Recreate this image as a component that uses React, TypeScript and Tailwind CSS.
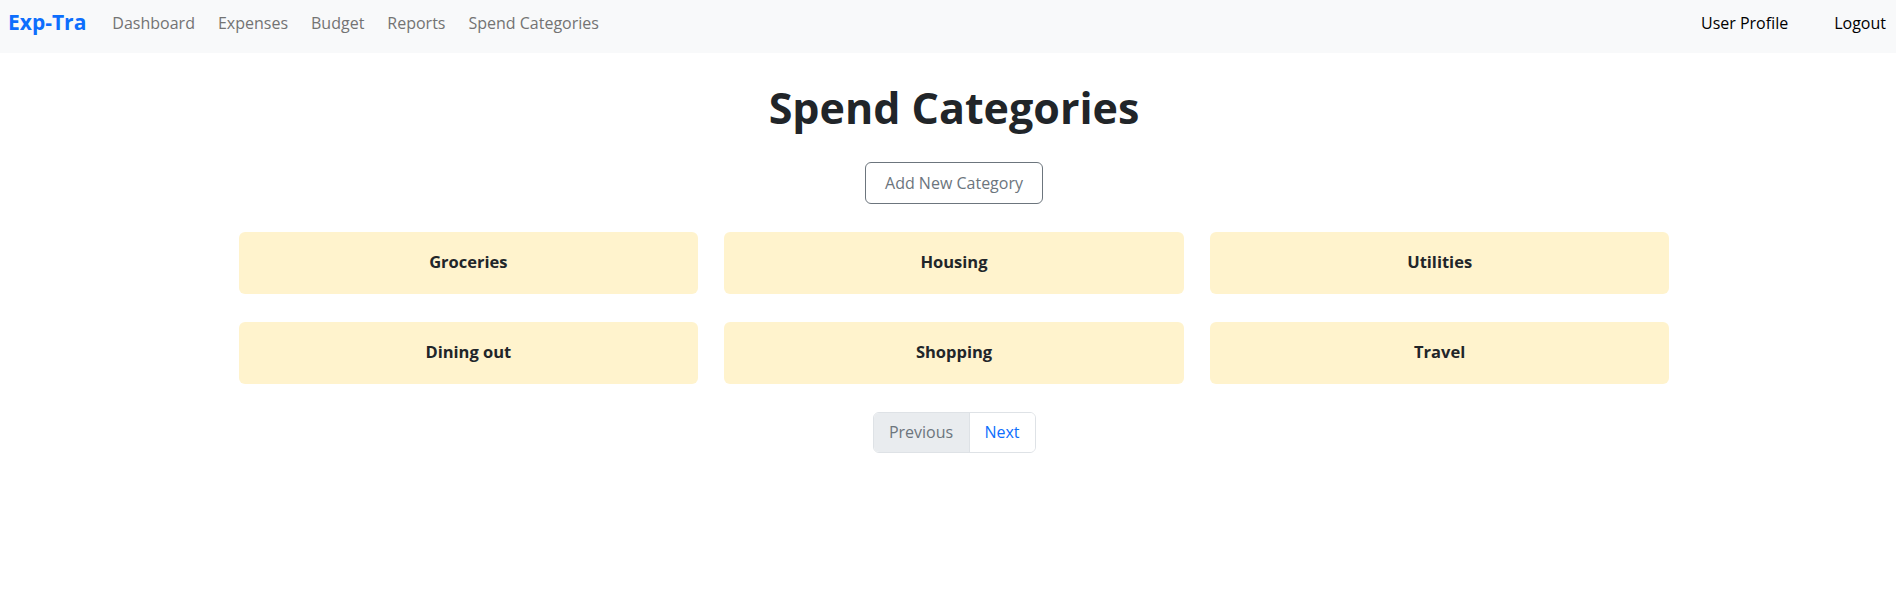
import React from "react";

const links = ["Dashboard", "Expenses", "Budget", "Reports", "Spend Categories"];
const categories = ["Groceries", "Housing", "Utilities", "Dining out", "Shopping", "Travel"];

const font = "font-['Open_Sans','Noto_Sans',sans-serif]";

export default function App() {
  return (
    <div className={`min-h-[603px] bg-white text-[#212529] ${font}`}>
      <nav className="flex h-[53px] items-center bg-[#f8f9fa] pb-2 pl-2 pr-[10px]">
        <span className="mr-[26px] text-[21px] font-bold text-[#0d6efd]">Exp-Tra</span>
        <ul className="flex gap-[23px]">
          {links.map((l) => (
            <li key={l} className="text-[16px] text-[#737373]">
              {l}
            </li>
          ))}
        </ul>
        <div className="ml-auto flex gap-[46px] text-[16px] text-black">
          <span>User Profile</span>
          <span>Logout</span>
        </div>
      </nav>

      <main className="flex flex-col items-center pl-3">
        <h1 className="mt-[29px] text-[43px] font-bold leading-[1.2]">Spend Categories</h1>
        <button className="mt-[28px] h-[42px] rounded-md border border-[#6c757d] px-[19px] text-[16px] text-[#6c757d]">
          Add New Category
        </button>

        <div className="mt-7 grid w-[1431px] grid-cols-3 gap-x-[26px] gap-y-7">
          {categories.map((c) => (
            <div
              key={c}
              className="flex h-[62px] items-center justify-center rounded-md bg-[#fff3cd] text-[16.5px] font-bold"
            >
              {c}
            </div>
          ))}
        </div>

        <div className="mt-7 flex h-[41px] overflow-hidden rounded-md border border-[#dee2e6] text-[16px]">
          <span className="flex w-[96px] items-center justify-center border-r border-[#dee2e6] bg-[#e9ecef] text-[#6c757d]">
            Previous
          </span>
          <span className="flex w-[65px] items-center justify-center bg-white text-[#0d6efd]">Next</span>
        </div>
      </main>
    </div>
  );
}
